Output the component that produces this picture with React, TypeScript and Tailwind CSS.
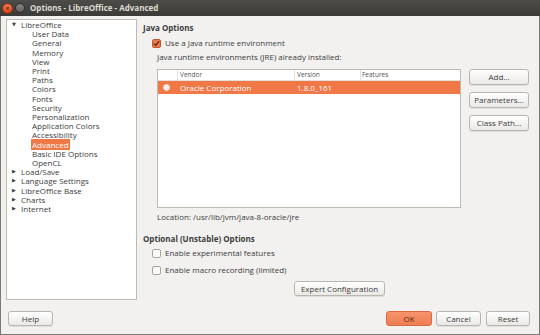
const font = "font-['Open_Sans','DejaVu_Sans',sans-serif]";

const treeChildren = [
  "User Data",
  "General",
  "Memory",
  "View",
  "Print",
  "Paths",
  "Colors",
  "Fonts",
  "Security",
  "Personalization",
  "Application Colors",
  "Accessibility",
  "Advanced",
  "Basic IDE Options",
  "OpenCL",
];

const collapsed = ["Load/Save", "Language Settings", "LibreOffice Base", "Charts", "Internet"];

function Btn({ label, className = "", primary = false }: { label: string; className?: string; primary?: boolean }) {
  return (
    <div
      className={`flex shrink-0 items-center justify-center rounded-[3px] border text-[8px] ${
        primary
          ? "border-[#d8693d] bg-gradient-to-b from-[#f6946c] to-[#ef7d52] text-[#5b2a12]"
          : "border-[#b9b6b0] bg-gradient-to-b from-white to-[#ebe9e6] text-[#3c3c3c] shadow-[0_1px_0_rgba(0,0,0,0.08)]"
      } ${className}`}
    >
      {label}
    </div>
  );
}

function Check({ checked = false }: { checked?: boolean }) {
  return (
    <div
      className={`flex h-[9px] w-[9px] shrink-0 items-center justify-center rounded-[2px] border ${
        checked ? "border-[#c4562e] bg-[#ef7a4f]" : "border-[#a9a6a0] bg-[#fbfbfa]"
      }`}
    >
      {checked && (
        <svg width="7" height="7" viewBox="0 0 7 7">
          <path d="M1 3.6 L2.8 5.3 L6 1.4" stroke="#5a2410" strokeWidth="1.3" fill="none" />
        </svg>
      )}
    </div>
  );
}

export default function App() {
  return (
    <div className={`flex h-[335px] w-[540px] flex-col overflow-hidden bg-[#f2f1f0] text-[#3c3c3c] ${font}`}>
      {/* title bar */}
      <div className="flex h-[16px] shrink-0 items-center bg-gradient-to-b from-[#4d4c48] to-[#3c3b37] pl-[2px]">
        <div className="flex h-[11px] w-[11px] shrink-0 items-center justify-center rounded-full border border-[#8a2a10] bg-gradient-to-b from-[#f47a57] to-[#d5441c]">
          <span className="text-[7px] leading-none text-[#4a1204]">×</span>
        </div>
        <div className="ml-[2px] h-[10px] w-[10px] shrink-0 rounded-full border border-[#2e2d2a] bg-gradient-to-b from-[#85847f] to-[#64635e]" />
        <span className="ml-[5px] text-[8px] font-bold text-[#dfdbd2]">Options - LibreOffice - Advanced</span>
      </div>

      <div className="flex flex-1 flex-col border-x border-b border-[#7a7974]">
        <div className="flex h-[284px] shrink-0 pl-[5px] pt-[3px]">
          {/* tree */}
          <div className="h-[281px] w-[131px] shrink-0 border border-[#bdbab4] bg-white text-[8px] leading-[9.2px]">
            <div className="flex items-center">
              <span className="ml-[5px] w-[9px] text-[5px]">▼</span>
              <span>LibreOffice</span>
            </div>
            {treeChildren.map((c) => (
              <div key={c} className="pl-[24px]">
                {c === "Advanced" ? (
                  <span className="bg-[#f07746] px-[1px] text-white">{c}</span>
                ) : (
                  <span className="px-[1px]">{c}</span>
                )}
              </div>
            ))}
            {collapsed.map((c) => (
              <div key={c} className="flex items-center">
                <span className="ml-[5px] w-[9px] text-[5px]">▶</span>
                <span>{c}</span>
              </div>
            ))}
          </div>

          {/* right panel */}
          <div className="ml-[6px] flex flex-1 flex-col pt-[4px] text-[8px]">
            <div className="font-bold leading-[10px]">Java Options</div>
            <div className="ml-[9px] mt-[4px] flex items-center gap-[4px]">
              <Check checked />
              <span>Use a Java runtime environment</span>
            </div>
            <div className="ml-[14px] mt-[3px] leading-[10px]">Java runtime environments (JRE) already installed:</div>
            <div className="ml-[14px] mt-[7px] flex">
              <div className="h-[139px] w-[304px] shrink-0 border border-[#bdbab4] bg-white">
                <div className="flex h-[11px] items-center border-b border-[#e3e1dd] text-[6.5px] text-[#555]">
                  <div className="h-full w-[20px] border-r border-[#e3e1dd]" />
                  <div className="flex h-full w-[117px] items-center border-r border-[#e3e1dd] pl-[2px]">Vendor</div>
                  <div className="flex h-full w-[66px] items-center border-r border-[#e3e1dd] pl-[2px]">Version</div>
                  <div className="pl-[1px]">Features</div>
                </div>
                <div className="flex h-[13px] items-center bg-[#f07746] text-[8px] text-white">
                  <div className="flex w-[20px] pl-[5px]">
                    <div className="h-[7px] w-[7px] rounded-full border border-[#f8d8c8] bg-[#fdf1ea]" />
                  </div>
                  <div className="w-[117px] pl-[2px]">Oracle Corporation</div>
                  <div className="w-[66px] pl-[2px]">1.8.0_161</div>
                </div>
              </div>
              <div className="ml-[8px] flex flex-col">
                <Btn label="Add..." className="h-[16px] w-[60px]" />
                <Btn label="Parameters..." className="mt-[7px] h-[16px] w-[60px]" />
                <Btn label="Class Path..." className="mt-[7px] h-[16px] w-[60px]" />
              </div>
            </div>
            <div className="ml-[14px] mt-[4px] leading-[10px]">Location: /usr/lib/jvm/java-8-oracle/jre</div>
            <div className="mt-[12px] font-bold leading-[10px]">Optional (Unstable) Options</div>
            <div className="ml-[9px] mt-[3px] flex items-center gap-[4px]">
              <Check />
              <span>Enable experimental features</span>
            </div>
            <div className="ml-[9px] mt-[5px] flex items-center gap-[4px]">
              <Check />
              <span>Enable macro recording (limited)</span>
            </div>
            <div className="mt-[5px] flex pl-[151px]">
              <Btn label="Expert Configuration" className="h-[15px] w-[91px]" />
            </div>
          </div>
        </div>

        {/* bottom buttons */}
        <div className="flex flex-1 items-start pl-[7px] pr-[9px] pt-[11px]">
          <Btn label="Help" className="h-[15px] w-[45px]" />
          <div className="flex-1" />
          <Btn label="OK" primary className="h-[15px] w-[46px]" />
          <Btn label="Cancel" className="ml-[4px] h-[15px] w-[45px]" />
          <Btn label="Reset" className="ml-[5px] h-[15px] w-[44px]" />
        </div>
      </div>
    </div>
  );
}
